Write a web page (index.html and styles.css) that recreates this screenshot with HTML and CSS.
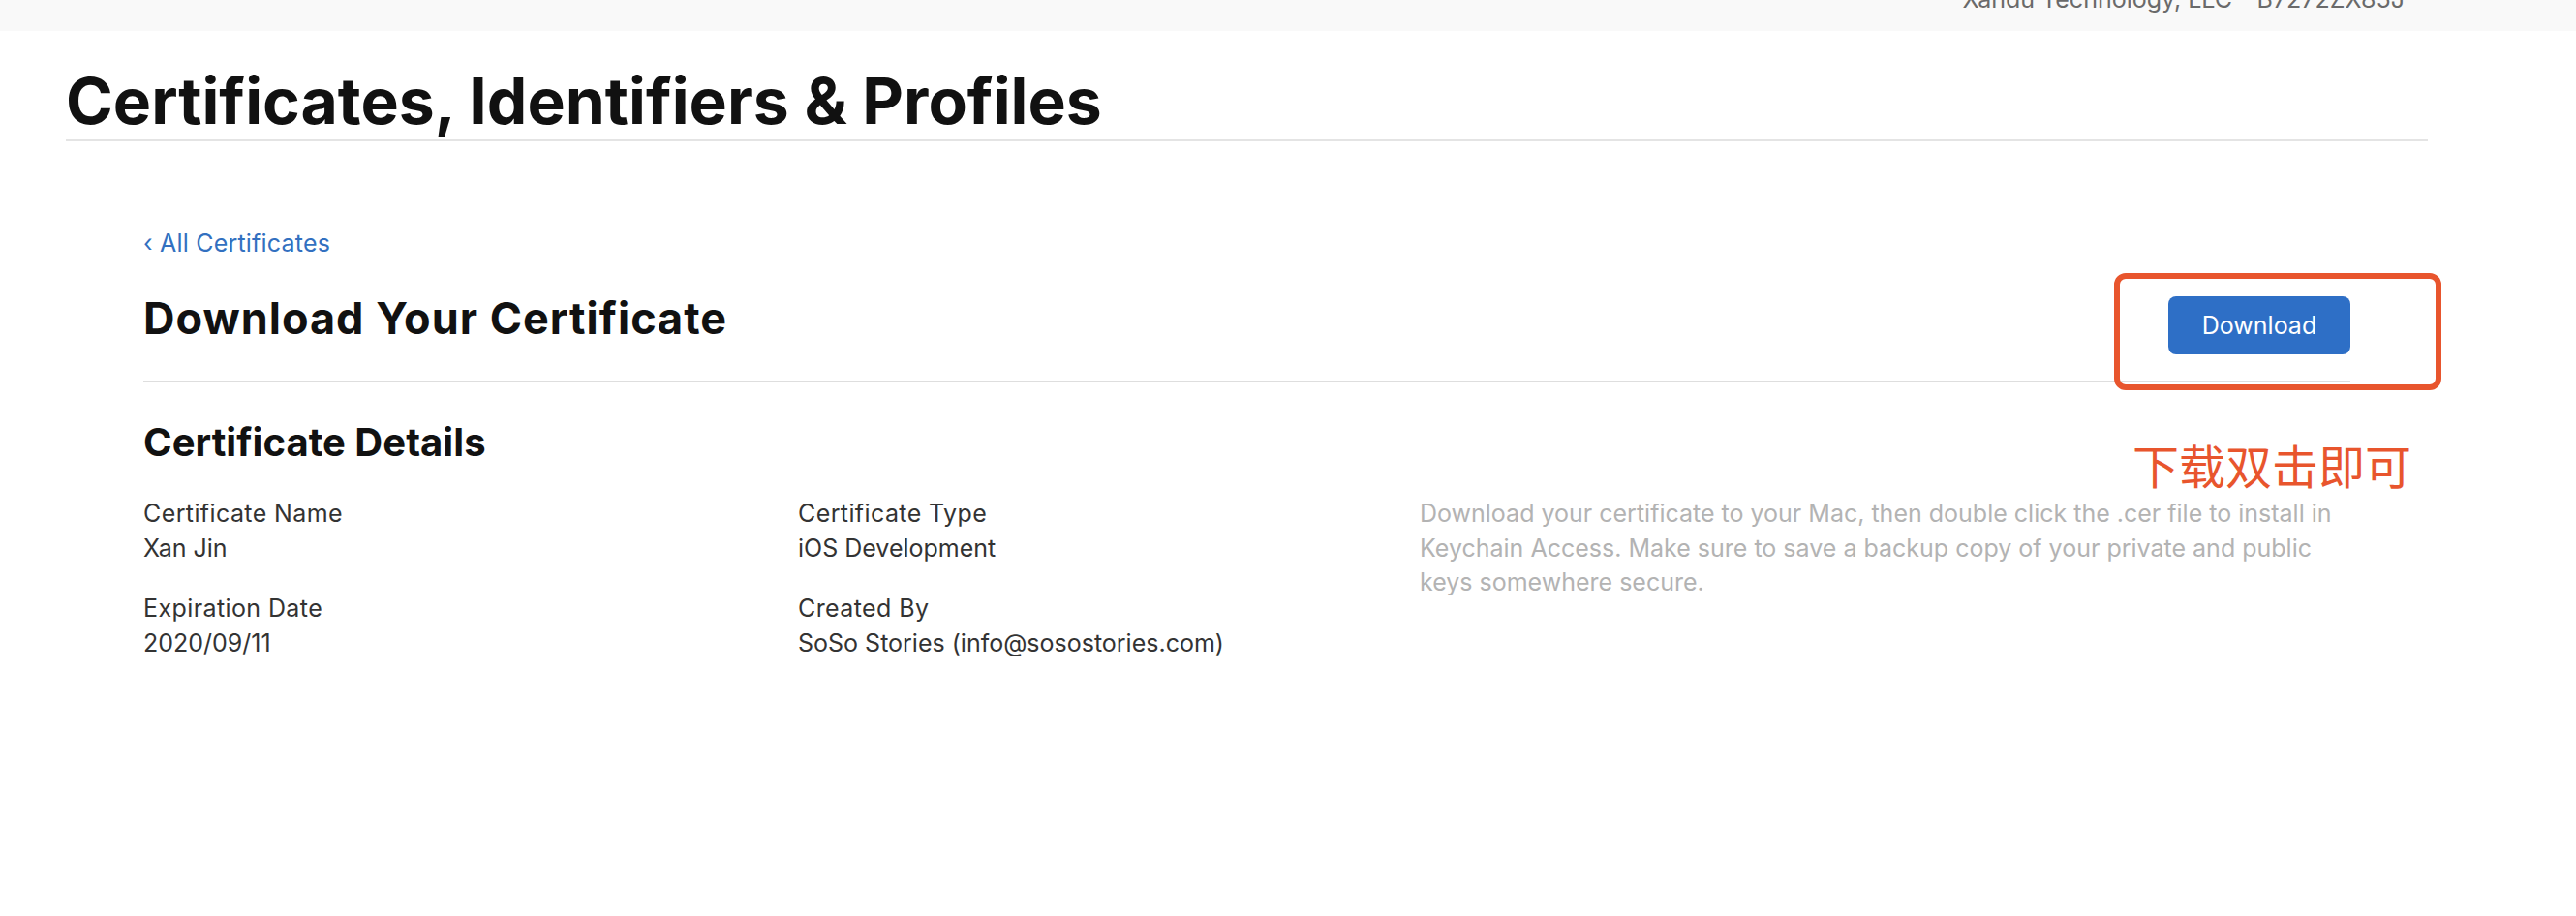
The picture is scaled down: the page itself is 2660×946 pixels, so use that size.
FILE: index.html
```html
<!DOCTYPE html>
<html lang="en">
<head>
<meta charset="utf-8">
<title>Certificates, Identifiers &amp; Profiles</title>
<link rel="stylesheet" href="styles.css">
</head>
<body>
<header class="topbar">
  <span class="team">Xandu Technology, LLC - B7272ZX85J</span>
</header>
<main class="page">
  <h1 class="page-title">Certificates, Identifiers &amp; Profiles</h1>
  <section class="content">
    <a class="back-link" href="#"><span class="chev">‹</span> All Certificates</a>
    <div class="head-row">
      <h2 class="section-title">Download Your Certificate</h2>
      <button class="btn-download" type="button">Download</button>
    </div>
    <h3 class="details-title">Certificate Details</h3>
    <div class="details">
      <div class="col">
        <div class="field">
          <div class="label">Certificate Name</div>
          <div class="value">Xan Jin</div>
        </div>
        <div class="field">
          <div class="label">Expiration Date</div>
          <div class="value">2020/09/11</div>
        </div>
      </div>
      <div class="col">
        <div class="field">
          <div class="label">Certificate Type</div>
          <div class="value">iOS Development</div>
        </div>
        <div class="field">
          <div class="label">Created By</div>
          <div class="value">SoSo Stories (info@sosostories.com)</div>
        </div>
      </div>
      <p class="desc">Download your certificate to your Mac, then double click the .cer file to install in Keychain Access. Make sure to save a backup copy of your private and public keys somewhere secure.</p>
    </div>
  </section>
  <div class="annot-box"></div>
  <div class="annot-text">下载双击即可</div>
</main>
</body>
</html>
```
FILE: styles.css
```css
* { box-sizing: border-box; }
html, body { margin: 0; padding: 0; background: #fff; }
body {
  font-family: Inter, "Noto Sans", "Noto Sans CJK SC", sans-serif;
  color: #333;
  position: relative;
  width: 2660px;
  height: 946px;
  overflow: hidden;
}
.topbar {
  height: 32px;
  background: #f9f9f9;
  display: flex;
  justify-content: flex-end;
  padding-right: 177px;
  overflow: hidden;
}
.team {
  font-size: 25px;
  line-height: 25px;
  margin-top: -13px;
  color: #6a6a6a;
  white-space: nowrap;
}
.page {
  padding: 0 153px 0 68px;
}
.page-title {
  margin: 32px 0 0;
  font-size: 66px;
  line-height: 80px;
  font-weight: 700;
  color: #111;
  letter-spacing: 0;
  border-bottom: 2px solid #e4e4e4;
}
.content {
  padding: 0 80px;
}
.back-link {
  display: block;
  margin-top: 87px;
  font-size: 25px;
  line-height: 36px;
  color: #3270c0;
  text-decoration: none;
  letter-spacing: 0.2px;
}
.chev { font-size: 25px; }
.head-row {
  display: flex;
  justify-content: space-between;
  align-items: flex-start;
  margin-top: 30px;
  padding-bottom: 27px;
  border-bottom: 2px solid #dedede;
}
.section-title {
  margin: 0;
  font-size: 45px;
  line-height: 60px;
  font-weight: 700;
  color: #111;
  letter-spacing: 1px;
}
.btn-download {
  margin-top: 7px;
  width: 188px;
  height: 60px;
  border: none;
  border-radius: 8px;
  background: #2e6fc6;
  color: #fff;
  font-family: Inter, sans-serif;
  font-size: 25px;
  padding: 0;
}
.details-title {
  margin: 37px 0 0;
  font-size: 40px;
  line-height: 50px;
  font-weight: 700;
  color: #111;
  letter-spacing: 0.05px;
}
.details {
  display: grid;
  grid-template-columns: 676px 642px 1fr;
  margin-top: 30px;
}
.col {
  display: flex;
  flex-direction: column;
  gap: 26px;
}
.label, .value {
  font-size: 25px;
  line-height: 36px;
  color: #333;
}
.label { letter-spacing: 0.4px; }
.desc {
  margin: 0;
  font-size: 25px;
  line-height: 35.5px;
  padding-top: 1px;
  color: #b3b3b3;
}
.annot-box {
  position: absolute;
  left: 2183px;
  top: 282px;
  width: 338px;
  height: 121px;
  border: 6px solid #e8552d;
  border-radius: 12px;
}
.annot-text {
  position: absolute;
  left: 2202px;
  top: 455px;
  font-family: "Noto Sans CJK SC", sans-serif;
  font-size: 48px;
  line-height: 48px;
  color: #e8552d;
  white-space: nowrap;
}
```
